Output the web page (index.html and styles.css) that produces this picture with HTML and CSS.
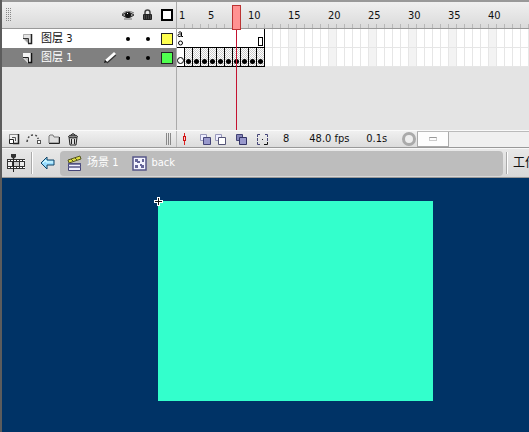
FILE: index.html
```html
<!DOCTYPE html>
<html lang="zh-CN">
<head>
<meta charset="utf-8">
<title>back</title>
<link rel="stylesheet" href="styles.css">
</head>
<body>
<main class="app">
<section class="timeline">
  <div class="layers">
    <header class="layer-row layers-head">
      <span class="grip" aria-hidden="true"></span><span></span><span></span>
      <button aria-label="显示图层"><svg width="14" height="12" viewBox="0 0 14 12"><path d="M1 5Q6 0 13 4M3 10h8" fill="none" stroke="#777"/><path d="M1 6Q7 1 13 6Q7 11 1 6z" fill="#999" stroke="#333"/><circle cx="7" cy="6" r="3" fill="#111"/><rect x="6" y="4" width="1" height="1" fill="#fff"/></svg></button>
      <button aria-label="锁定图层"><svg width="11" height="12" viewBox="0 0 11 12"><path d="M3 6V3.500Q3 1 5.500 1T8 3.500V6" fill="none" stroke="#444" stroke-width="1.500"/><rect x="1" y="5" width="9" height="6" rx="1" fill="#222"/><path d="M2 7h7M2 9h7" stroke="#666" stroke-dasharray="1 1"/></svg></button>
      <button class="swatch outline" aria-label="轮廓"></button>
    </header>
    <div class="layer-row">
      <svg class="page" width="12" height="12" viewBox="0 0 12 12"><path d="M1 1h9v10H6L1 6z" fill="#e4e4e4"/><path d="M1.500 6V1.500H9" fill="none" stroke="#aaa"/><path d="M1 5.500h5.500V11" fill="none" stroke="#333"/><path d="M2 6l4 4V6z" fill="#999"/><path d="M9.500 1v9.500H6" fill="none" stroke="#222" stroke-width="1.500"/></svg>
      <span>图层 3</span><span></span><span class="dot"></span><span class="dot"></span><button class="swatch yellow" aria-label="图层 3 颜色"></button>
    </div>
    <div class="layer-row selected">
      <svg class="page" width="12" height="12" viewBox="0 0 12 12"><path d="M1 1h9v10H6L1 6z" fill="#f4f4f4"/><path d="M1 5.500h5.500V11" fill="none" stroke="#222"/><path d="M2 6l4 4V6z" fill="#bbb"/><path d="M9.500 1v9.500H6" fill="none" stroke="#111" stroke-width="1.500"/></svg>
      <span>图层 1</span>
      <svg width="14" height="13" viewBox="0 0 14 13"><path d="M3 11L12 3" stroke="#333" stroke-width="4"/><path d="M3 10L12 2" stroke="#fff" stroke-width="3"/><path d="M1 12l1-3 2 2z" fill="#111"/></svg>
      <span class="dot"></span><span class="dot"></span><button class="swatch green" aria-label="图层 1 颜色"></button>
    </div>
  </div>
  <div class="frames">
    <div class="ruler"><span class="first">1</span><span>5</span><span>10</span><span>15</span><span>20</span><span>25</span><span>30</span><span>35</span><span>40</span></div>
    <div class="track"><div class="span-frames"><svg class="action" width="7" height="18" viewBox="0 0 7 18"><path d="M1.500 3.500Q3 2 4.500 3.500V7.500H6M4.500 5H2.500Q1 5 1 6.500T3 7.500L4.500 6.500" fill="none" stroke="#000"/><circle cx="3.500" cy="14" r="2" fill="#fff" stroke="#000"/></svg><i class="span-end"></i></div></div>
    <div class="track"><div class="keys"><i class="key empty"></i><i class="key"></i><i class="key"></i><i class="key"></i><i class="key"></i><i class="key"></i><i class="key"></i><i class="key"></i><i class="key"></i><i class="key"></i><i class="key"></i></div></div>
    <div class="playhead" aria-hidden="true"></div>
  </div>
</section>
<footer class="status">
  <div class="layer-tools">
    <button aria-label="插入图层"><svg width="12" height="12" viewBox="0 0 12 12"><path d="M1.500 1.500h9v9h-9z" fill="#eee" stroke="#888"/><path d="M10.500 1v9.500H5" fill="none" stroke="#222" stroke-width="1.500"/><path d="M1.500 6.500h4v4h-4z" fill="#fff" stroke="#222"/><path d="M4 4.500h3.500V8" fill="none" stroke="#555"/></svg></button>
    <button aria-label="引导层"><svg width="16" height="12" viewBox="0 0 16 12"><path d="M1 9Q2 2 7 2T12 6" fill="none" stroke="#444" stroke-width="1.500" stroke-dasharray="2 2"/><rect x="11.500" y="7.500" width="3" height="3" fill="#fff" stroke="#555"/></svg></button>
    <button aria-label="文件夹"><svg width="13" height="12" viewBox="0 0 13 12"><path d="M1 10V3L2 2h3l1 2h5v6z" fill="#ddd" stroke="#777"/><path d="M1 10.500h10.500V4" fill="none" stroke="#222"/></svg></button>
    <button aria-label="删除"><svg width="12" height="13" viewBox="0 0 12 13"><path d="M2 4l1 8h6l1-8z" fill="#ddd" stroke="#222"/><ellipse cx="6" cy="3.500" rx="4.500" ry="1.500" fill="#888" stroke="#222"/><path d="M4 2Q6-1 8 2M4.500 6v5M7.500 6v5" fill="none" stroke="#222"/></svg></button>
    <span class="grip small" aria-hidden="true"></span>
  </div>
  <div class="frame-tools">
    <button aria-label="居中帧"><svg width="5" height="12" viewBox="0 0 5 12"><path d="M2.500 0v12" stroke="#d22"/><rect x="1.500" y="3.500" width="2" height="4" fill="#fcc" stroke="#c11"/></svg></button>
    <div class="onion">
    <button aria-label="绘图纸外观"><svg width="11" height="11" viewBox="0 0 11 11"><path d="M.5.5h6v6h-6z" fill="#eef" stroke="#99b"/><path d="M3.500 3.500h7v7h-7z" fill="#99c" stroke="#447"/></svg></button>
    <button aria-label="绘图纸轮廓"><svg width="11" height="11" viewBox="0 0 11 11"><path d="M.5.5h6v6h-6z" fill="#eef" stroke="#99b"/><path d="M3.500 3.500h7v7h-7z" fill="#fff" stroke="#557"/></svg></button>
    </div>
    <button aria-label="编辑多个帧"><svg width="11" height="11" viewBox="0 0 11 11"><path d="M.5.5h6v6h-6z" fill="#88b" stroke="#447"/><path d="M3.500 3.500h7v7h-7z" fill="#99c" stroke="#336"/></svg></button>
    <button aria-label="修改标记"><svg width="11" height="11" viewBox="0 0 11 11"><path d="M3 .5H.5V3M.5 4v3M.5 8v2.500H3M8 .5h2.500V3M10.500 4v3" fill="none" stroke="#447"/><path d="M5 5h1v1H5z" fill="#222"/><path d="M7 10.500h3.500V8" fill="none" stroke="#111"/></svg></button>
    <span class="current">8</span><span class="rate">48.0 fps</span><span class="time">0.1s</span>
    <span class="knob" aria-hidden="true"></span>
    <div class="scroll"><button aria-label="滚动"><i></i></button></div>
  </div>
</footer>
<nav class="editbar">
  <button aria-label="时间轴"><svg width="19" height="18" viewBox="0 0 19 18"><path d="M0 5h18v10H0z" fill="#333"/><path d="M1 6.500h17M1 13.500h17" stroke="#fff" stroke-dasharray="2 1"/><path d="M1 8h4v4H1zM13 8h4v4h-4z" fill="#eee"/><path d="M6 8h6v4H6z" fill="#ccc"/><path d="M6.500 0v18" stroke="#222"/><path d="M4 0h5v3L6.500 5 4 3z" fill="#333"/></svg></button>
  <i class="divider"></i>
  <button class="backward" aria-label="返回"><svg width="16" height="14" viewBox="0 0 16 14"><path d="M1 7l6-6v3h7v5H7v4z" fill="#9df" stroke="#146" stroke-linejoin="round"/><path d="M3 7l3-3v2h7" fill="none" stroke="#dff"/></svg></button>
  <div class="crumbs">
    <a href="#scene"><svg width="16" height="17" viewBox="0 0 16 17"><path d="M1 5l12-4 1 3L2 8z" fill="#dd4" stroke="#552"/><path d="M4 4l2 2M8 3l2 2" stroke="#552"/><path d="M1.500 8.500h12v7h-12z" fill="#eef" stroke="#447"/><path d="M1 9h13M1 12h13" stroke="#558" stroke-width="1.500"/></svg><span>场景 1</span></a>
    <a class="symbol" href="#back"><svg width="15" height="15" viewBox="0 0 15 15"><path d="M1 1h13v13H1z" fill="#f4f4ff" stroke="#558" stroke-width="1.500"/><path d="M3 3h3v2h2v2H5V6H3zM10 3h2v3h-2zM3 9h3v3H3zM8 8h2v1h2v3H9v-2H8z" fill="#669"/></svg><span>back</span></a>
  </div>
  <i class="divider"></i>
  <span class="workspace">工作</span>
</nav>
<section class="stage">
  <div class="artboard"><svg class="origin" width="9" height="9" viewBox="0 0 9 9"><path d="M4.500 0v9M0 4.500h9" stroke="#fff" stroke-width="3"/><path d="M4.500 1v7M1 4.500h7" stroke="#111"/></svg></div>
</section>
</main>
</body>
</html>
```
FILE: styles.css
```css
* { box-sizing: border-box; }
body {
  margin: 0;
  background: #003366;
  color: #111;
  font: 11px/16px "DejaVu Sans Condensed", "Noto Sans CJK SC", sans-serif;
}
button { margin: 0; padding: 0; border: 0; background: none; font: inherit; }
svg { display: block; }
a { color: inherit; text-decoration: none; }
.app {
  display: flex;
  flex-direction: column;
  min-height: 100vh;
  border-left: 2px solid #5c5c5c;
  overflow: hidden;
}
.timeline {
  display: grid;
  grid-template-columns: 174px 1fr;
  min-height: 130px;
  border-top: 2px solid #999;
  background: #e4e4e4;
}
.layer-row {
  display: grid;
  grid-template-columns: 39px 61px 16px 20px 19px 19px;
  align-items: center;
  justify-items: center;
  height: 19px;
  background: #fff;
}
.layer-row > :first-child, .layer-row > :nth-child(2) { justify-self: start; }
.layers-head {
  height: 27px;
  border-bottom: 1px solid #999;
  background: linear-gradient(#f0f0f0, #dadada);
}
.selected { background: #808080; color: #fff; }
.page { margin-left: 20px; }
.grip {
  width: 5px;
  height: 14px;
  margin-left: 4px;
  background: repeating-linear-gradient(90deg, #888 0 1px, transparent 1px 2px);
  -webkit-mask: repeating-linear-gradient(#000 0 1px, transparent 1px 2px);
  mask: repeating-linear-gradient(#000 0 1px, transparent 1px 2px);
}
.small { height: 12px; margin-left: auto; -webkit-mask: none; mask: none; }
.dot { width: 4px; height: 4px; border-radius: 50%; background: #000; }
.swatch { width: 12px; height: 12px; border: 1px solid #222; }
.outline { border: 2px solid #000; background: #fff; }
.yellow { background: #ffff4f; }
.green { background: #4fff4f; }
.frames { position: relative; min-width: 0; border-left: 1px solid #aaa; overflow: hidden; }
.ruler {
  display: flex;
  height: 27px;
  padding-top: 6px;
  border-bottom: 1px solid #999;
  background:
    repeating-linear-gradient(90deg, transparent 0 7px, #b8b8b8 7px 8px) 0 100% / 100% 4px no-repeat,
    linear-gradient(#f0f0f0, #dadada);
}
.ruler span { flex: 0 0 40px; }
.ruler .first { flex-basis: 31px; padding-left: 2px; }
.track {
  height: 19px;
  border-bottom: 1px solid #e6e6e6;
  background:
    repeating-linear-gradient(90deg, transparent 0 7px, #e6e6e6 7px 8px),
    repeating-linear-gradient(90deg, transparent 0 32px, #f3f3f3 32px 40px),
    #fff;
}
.span-frames, .keys {
  display: flex;
  width: 88px;
  height: 19px;
  border-right: 1px solid #000;
  border-bottom: 1px solid #000;
  background: #fff;
}
.span-frames { justify-content: space-between; align-items: flex-end; }
.span-end { width: 5px; height: 9px; margin: 0 1px 1px 0; border: 1px solid #000; }
.key {
  display: flex;
  align-items: flex-end;
  justify-content: center;
  flex: 0 0 8px;
  padding-bottom: 2px;
  border-right: 1px solid #000;
  background: repeating-conic-gradient(#ccc 0 25%, #fff 0 50%) 0 0 / 2px 2px;
}
.key:last-child { border-right: 0; flex-basis: 7px; }
.key::before { content: ""; flex: none; width: 5px; height: 5px; border-radius: 50%; background: #000; }
.key.empty { background: #fff; }
.key.empty::before { border: 1px solid #000; background: #fff; }
.playhead {
  position: absolute;
  top: 3px;
  bottom: 0;
  left: 55px;
  width: 9px;
  background: linear-gradient(#c41230, #c41230) 4px 0 / 1px 100% no-repeat;
}
.playhead::before {
  content: "";
  display: block;
  height: 23px;
  border: 1px solid #b33;
  background: #ff9292;
}
.status {
  display: grid;
  grid-template-columns: 174px 1fr;
  height: 18px;
  border-top: 1px solid #fafafa;
  border-bottom: 1px solid #999;
  background: linear-gradient(#f0f0f0, #dcdcdc);
}
.layer-tools, .frame-tools { display: flex; align-items: center; min-width: 0; }
.layer-tools { gap: 6px; padding: 0 5px 0 6px; }
.frame-tools { border-left: 1px solid #bbb; padding-left: 5px; gap: 10px; }
.onion { display: flex; gap: 4px; padding-left: 3px; }
.current { padding-left: 5px; }
.rate { width: 52px; padding-left: 10px; white-space: nowrap; }
.time { padding-left: 5px; }
.knob {
  flex: 0 0 14px;
  height: 14px;
  margin-left: 5px;
  border: 3px solid #aaa;
  border-radius: 50%;
  background: #eee;
}
.scroll { flex: 1; align-self: stretch; display: flex; margin-left: -9px; border-top: 1px solid #bbb; background: #f0f0f0; }
.scroll button { display: flex; align-items: center; justify-content: center; width: 32px; border: 1px solid #aaa; border-top: 0; background: #fdfdfd; }
.scroll i { width: 8px; height: 4px; border: 1px solid #ccc; border-top-color: #999; }
.editbar {
  display: flex;
  align-items: center;
  height: 30px;
  padding: 0 0 0 5px;
  border-top: 1px solid #f8f8f8;
  border-bottom: 1px solid #999;
  background: linear-gradient(#e8e8e8, #d8d8d8);
  white-space: nowrap;
}
.divider { flex: 0 0 2px; height: 22px; margin: 0 2px 0 5px; border-left: 1px solid #aaa; border-right: 1px solid #fff; }
.backward { margin: 0 4px 0 5px; }
.crumbs {
  flex: 1;
  display: flex;
  align-items: center;
  gap: 14px;
  height: 25px;
  padding-left: 7px;
  border-radius: 4px;
  background: #bdbdbd;
  color: #fff;
}
.crumbs a { display: flex; align-items: center; gap: 4px; }
.crumbs + .divider { margin: 0 5px 0 3px; }
.workspace { width: 16px; overflow: hidden; font-size: 12px; }
.stage { flex: 1; padding: 23px 96px 31px 156px; background: #003366; }
.artboard { position: relative; height: 200px; background: #33ffcc; }
.origin { position: absolute; top: -4px; left: -4px; }
```
